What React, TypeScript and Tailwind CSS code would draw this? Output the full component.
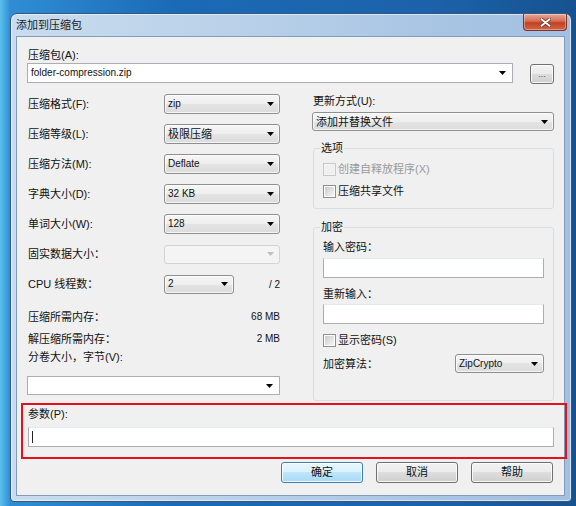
import React from 'react';
import clsx from 'clsx';

const Arrow: React.FC<{ disabled?: boolean }> = ({ disabled }) => (
  <svg width="7" height="4" viewBox="0 0 7 4" className="shrink-0">
    <path d="M0 0h7L3.5 4z" fill={disabled ? '#c0c0c0' : '#000'} />
  </svg>
);

// Win7 style drop-down list (read-only)
const Select: React.FC<{ value?: string; className?: string; disabled?: boolean; cjk?: boolean }> = ({
  value,
  className,
  disabled,
  cjk,
}) => (
  <div
    className={clsx(
      'flex items-center justify-between rounded-[3px] border pl-[3px] pr-[5px]',
      disabled
        ? 'border-[#d3d3d3] bg-[#f4f4f4]'
        : 'border-[#8e8f8f] bg-[linear-gradient(#f6f6f6,#eeeeee_50%,#e4e4e4_50%,#dcdcdc)] shadow-[inset_0_0_0_1px_rgba(255,255,255,0.7)]',
      className
    )}
  >
    <span className={clsx('leading-[16px]', cjk ? 'text-[11px]' : 'text-[10px]')}>{value}</span>
    <Arrow disabled={disabled} />
  </div>
);

// editable combo box (white)
const Combo: React.FC<{ value?: string; className?: string }> = ({ value, className }) => (
  <div className={clsx('flex items-center justify-between border border-[#abadb3] bg-white pl-[3px] pr-[6px]', className)}>
    <span className="text-[10px] leading-[16px]">{value}</span>
    <Arrow />
  </div>
);

const TextBox: React.FC<{ className?: string; children?: React.ReactNode }> = ({ className, children }) => (
  <div className={clsx('flex items-center border border-[#abadb3] border-t-[#e3e9ef] bg-white pl-[3px]', className)}>
    {children}
  </div>
);

const Button: React.FC<{ primary?: boolean; className?: string; children: React.ReactNode }> = ({
  primary,
  className,
  children,
}) => (
  <div
    className={clsx(
      'flex items-center justify-center rounded-[3px] border shadow-[inset_0_0_0_1px_rgba(255,255,255,0.8)]',
      primary
        ? 'border-[#3c7fb1] bg-[linear-gradient(#eaf6fd,#d9f0fc_50%,#bee6fd_50%,#a7d9f5)]'
        : 'border-[#707070] bg-[linear-gradient(#f2f2f2,#ebebeb_50%,#dddddd_50%,#cfcfcf)]',
      className
    )}
  >
    {children}
  </div>
);

const CheckBox: React.FC<{ label: string; disabled?: boolean }> = ({ label, disabled }) => (
  <div className="flex h-[16px] items-center">
    <div
      className={clsx(
        'h-[13px] w-[13px] border p-[1px]',
        disabled ? 'border-[#c8c8c8] bg-[#f4f4f4]' : 'border-[#8e8f8f] bg-white'
      )}
    >
      <div
        className={clsx(
          'h-full w-full',
          disabled ? 'bg-[#f0f0f0]' : 'bg-[linear-gradient(135deg,#cbcbcb,#f6f6f6)]'
        )}
      />
    </div>
    <span className={clsx('ml-[2px] leading-[16px]', disabled && 'text-[#9a9a9a]')}>{label}</span>
  </div>
);

const Row: React.FC<{ label: string; children: React.ReactNode }> = ({ label, children }) => (
  <div className="flex h-[20px] items-center">
    <span className="w-[137px] pl-[1px] leading-[16px]">{label}</span>
    {children}
  </div>
);

export default function App() {
  return (
    <div className="h-[506px] w-[576px] overflow-hidden bg-[linear-gradient(90deg,#5cc0ee_0px,#2f8ed3_10px,#1b6ab6_30%,#1c62aa_75%,#16528f)] pb-[4px] pl-[10px] pr-[4px] pt-[13px] font-['Liberation_Sans','Noto_Sans_CJK_SC',sans-serif] text-[11px] text-[#111]">
      <div className="flex h-[489px] flex-col rounded-b-[4px] rounded-t-[7px] border border-[#34587e] bg-[linear-gradient(90deg,#cadcee,#b7cfe8_45%,#a9c5e4_75%,#a2c0e2)] shadow-[inset_0_0_0_1px_rgba(255,255,255,0.55)]">
        {/* title bar */}
        <div className="flex h-[23px] shrink-0 items-start justify-between">
          <span className="pl-[5px] pt-[3px] leading-[16px] text-[#1a1a1a]">添加到压缩包</span>
          <div className="mr-[4px] flex h-[17px] w-[44px] items-center justify-center rounded-b-[4px] border border-t-0 border-[#7b3426] bg-[linear-gradient(#e9a897,#d46c55_45%,#c2401f_55%,#d1664a)] shadow-[inset_0_0_0_1px_rgba(255,255,255,0.35)]">
            <svg width="11" height="9" viewBox="0 0 11 9">
              <path d="M1.5 1.2L9.5 7.8M9.5 1.2L1.5 7.8" stroke="#6b2a1e" strokeWidth="3.4" strokeLinecap="round" />
              <path d="M1.5 1.2L9.5 7.8M9.5 1.2L1.5 7.8" stroke="#fff" strokeWidth="2" strokeLinecap="round" />
            </svg>
          </div>
        </div>

        {/* client area */}
        <div className="ml-[6px] mr-[7px] flex h-[458px] flex-col bg-[#f0f0f0] pt-[10px] shadow-[0_0_0_1px_#7f9db9]">
          <div className="px-[10px]">
            <div className="h-[16px] pl-[1px] leading-[16px]">压缩包(A):</div>
            <div className="flex h-[20px] items-start">
              <Combo value="folder-compression.zip" className="h-[20px] flex-1" />
              <Button className="ml-[17px] mt-[1px] h-[20px] w-[24px] shrink-0">
                <span className="text-[9px] leading-[10px] text-[#555]">...</span>
              </Button>
            </div>

            <div className="mt-[10px] flex h-[308px] gap-[32px]">
              {/* left column */}
              <div className="flex w-[253px] flex-col pt-[1px]">
                <div className="flex flex-col gap-[10px]">
                  <Row label="压缩格式(F):">
                    <Select value="zip" className="h-[20px] w-[116px]" />
                  </Row>
                  <Row label="压缩等级(L):">
                    <Select value="极限压缩" cjk className="h-[20px] w-[116px]" />
                  </Row>
                  <Row label="压缩方法(M):">
                    <Select value="Deflate" className="h-[20px] w-[116px]" />
                  </Row>
                  <Row label="字典大小(D):">
                    <Select value="32 KB" className="h-[20px] w-[116px]" />
                  </Row>
                  <Row label="单词大小(W):">
                    <Select value="128" className="h-[20px] w-[116px]" />
                  </Row>
                  <Row label="固实数据大小：">
                    <Select disabled className="h-[19px] w-[116px]" />
                  </Row>
                  <Row label="CPU 线程数：">
                    <Select value="2" className="h-[19px] w-[70px]" />
                    <span className="flex-1 text-right text-[10px]">/ 2</span>
                  </Row>
                </div>
                <div className="mt-[15px] flex h-[16px] items-center justify-between pl-[1px] leading-[16px]">
                  <span>压缩所需内存：</span>
                  <span className="text-[10px]">68 MB</span>
                </div>
                <div className="mt-[6px] flex h-[16px] items-center justify-between pl-[1px] leading-[16px]">
                  <span>解压缩所需内存：</span>
                  <span className="text-[10px]">2 MB</span>
                </div>
                <div className="mt-[2px] h-[16px] pl-[1px] leading-[16px]">分卷大小，字节(V):</div>
                <Combo className="mt-[11px] h-[19px]" />
              </div>

              {/* right column */}
              <div className="flex flex-1 flex-col">
                <div className="h-[16px] pl-[1px] leading-[16px]">更新方式(U):</div>
                <Select value="添加并替换文件" cjk className="mt-[3px] h-[19px]" />

                <fieldset className="ml-[1px] mt-[9px] rounded-[3px] border border-[#d5dfe5] px-[9px] pb-[9px] pt-[5px]">
                  <legend className="-ml-[3px] px-[1px] leading-[16px]">选项</legend>
                  <div className="flex flex-col gap-[6px]">
                    <CheckBox label="创建自释放程序(X)" disabled />
                    <CheckBox label="压缩共享文件" />
                  </div>
                </fieldset>

                <fieldset className="ml-[1px] mt-[10px] flex flex-col rounded-[3px] border border-[#d5dfe5] px-[9px] pb-[27px] pt-[4px]">
                  <legend className="-ml-[3px] px-[1px] leading-[16px]">加密</legend>
                  <div className="h-[16px] leading-[16px]">输入密码：</div>
                  <TextBox className="mt-[3px] h-[20px]" />
                  <div className="mt-[8px] h-[16px] leading-[16px]">重新输入：</div>
                  <TextBox className="mt-[2px] h-[20px]" />
                  <div className="mt-[8px]">
                    <CheckBox label="显示密码(S)" />
                  </div>
                  <div className="mt-[6px] flex h-[19px] items-center justify-between">
                    <span className="leading-[16px]">加密算法：</span>
                    <Select value="ZipCrypto" className="h-[19px] w-[89px]" />
                  </div>
                </fieldset>
              </div>
            </div>
          </div>

          {/* parameters, highlighted */}
          <div className="-mr-[3px] ml-[4px] mt-[2px] border-2 border-[#e4121b] pb-[10px] pl-[5px] pr-[11px] pt-[1px]">
            <div className="h-[16px] leading-[16px]">参数(P):</div>
            <TextBox className="mt-[5px] h-[20px]">
              <span className="h-[12px] w-[1px] bg-[#222]" />
            </TextBox>
          </div>

          <div className="mt-[3px] flex justify-end gap-[13px] pr-[11px]">
            <Button primary className="h-[21px] w-[82px]">
              确定
            </Button>
            <Button className="h-[21px] w-[82px]">取消</Button>
            <Button className="h-[21px] w-[82px]">帮助</Button>
          </div>
        </div>
      </div>
    </div>
  );
}
